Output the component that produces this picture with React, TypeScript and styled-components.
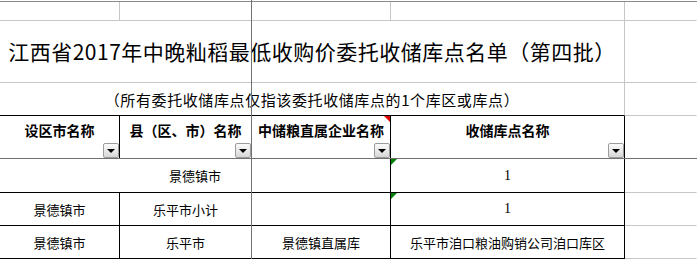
import styled, { createGlobalStyle } from 'styled-components';

type Line = 'grid' | 'black' | 'none';

const lineColor: Record<Line, string> = {
  grid: '#c6c6c6',
  black: '#000000',
  none: 'transparent',
};

const GlobalStyle = createGlobalStyle`
  html, body {
    margin: 0;
    padding: 0;
    background: #ffffff;
  }
  body {
    font-family: "Noto Sans CJK SC", "Liberation Sans", sans-serif;
    color: #000;
  }
`;

const Sheet = styled.div`
  position: relative;
  width: 697px;
  height: 259px;
  overflow: hidden;
  display: grid;
  grid-template-columns: 120px 132px 139px 234px 1fr;
  grid-template-rows: 2px 19px 62px 33px 43px 34px 33px 33px 1fr;
  background: #ffffff;
`;

const TopEdge = styled.div`
  grid-column: 1 / -1;
  box-sizing: border-box;
  border-bottom: 1px solid #8a8a8a;
`;

const Cell = styled.div<{
  $span?: number;
  $right?: Line;
  $bottom?: Line;
  $size?: number;
  $bold?: boolean;
  $lift?: number;
  $serif?: boolean;
  $track?: number;
}>`
  position: relative;
  box-sizing: border-box;
  grid-column: span ${(p) => p.$span ?? 1};
  border-right: 1px solid ${(p) => lineColor[p.$right ?? 'grid']};
  border-bottom: 1px solid ${(p) => lineColor[p.$bottom ?? 'grid']};
  display: flex;
  align-items: center;
  justify-content: center;
  padding-bottom: ${(p) => p.$lift ?? 0}px;
  font-family: ${(p) =>
    p.$serif
      ? '"Liberation Serif", serif'
      : '"Noto Sans CJK SC", "Liberation Sans", sans-serif'};
  font-size: ${(p) => p.$size ?? 13}px;
  font-weight: ${(p) => (p.$bold ? 700 : 400)};
  letter-spacing: ${(p) => p.$track ?? 0}px;
  white-space: nowrap;
  line-height: 1;
`;

const FilterButton = styled.div`
  position: absolute;
  right: 0;
  bottom: 0;
  width: 16px;
  height: 15px;
  box-sizing: border-box;
  border: 1px solid #9c9c9c;
  border-radius: 2px;
  background: linear-gradient(180deg, #fbfbfb 0%, #e6e6e6 60%, #d6d6d6 100%);
  display: flex;
  align-items: center;
  justify-content: center;

  &::after {
    content: '';
    width: 0;
    height: 0;
    border-left: 4px solid transparent;
    border-right: 4px solid transparent;
    border-top: 4px solid #000;
    margin-top: 1px;
  }
`;

const CornerMark = styled.div<{ $color: string; $side: 'left' | 'right' }>`
  position: absolute;
  top: 0;
  ${(p) => p.$side}: 0;
  width: 0;
  height: 0;
  border-top: 6px solid ${(p) => p.$color};
  ${(p) =>
    p.$side === 'right'
      ? 'border-left: 6px solid transparent;'
      : 'border-right: 6px solid transparent;'}
`;

const FreezeV = styled.div`
  position: absolute;
  top: 0;
  bottom: 0;
  left: 251px;
  width: 1px;
  background: #707070;
`;

const FreezeH = styled.div`
  position: absolute;
  left: 0;
  right: 0;
  top: 158px;
  height: 1px;
  background: #707070;
`;

const headers = ['设区市名称', '县（区、市）名称', '中储粮直属企业名称', '收储库点名称'];

export default function App() {
  return (
    <>
      <GlobalStyle />
      <Sheet>
        <TopEdge />

        {/* blank first row */}
        <Cell />
        <Cell />
        <Cell />
        <Cell />
        <Cell $right="none" />

        {/* title */}
        <Cell $span={4} $size={21} $track={0.5}>
          江西省2017年中晚籼稻最低收购价委托收储库点名单（第四批）
        </Cell>
        <Cell $right="none" />

        <Cell $span={4} $size={15} $track={0.6} $bottom="black">
          （所有委托收储库点仅指该委托收储库点的1个库区或库点）
        </Cell>
        <Cell $right="none" />

        {/* header with filter buttons */}
        {headers.map((h, i) => (
          <Cell key={h} $right="black" $bold $size={14} $lift={14}>
            {h}
            {i === 2 && <CornerMark $color="#e00000" $side="right" />}
            <FilterButton />
          </Cell>
        ))}
        <Cell $right="none" />

        <Cell $span={3} $right="black" $bottom="black">
          景德镇市
        </Cell>
        <Cell $right="black" $bottom="black" $serif $size={14}>
          <CornerMark $color="#008000" $side="left" />1
        </Cell>
        <Cell $right="none" />

        <Cell $right="black" $bottom="black">
          景德镇市
        </Cell>
        <Cell $right="black" $bottom="black">
          乐平市小计
        </Cell>
        <Cell $right="black" $bottom="black" />
        <Cell $right="black" $bottom="black" $serif $size={14}>
          <CornerMark $color="#008000" $side="left" />1
        </Cell>
        <Cell $right="none" />

        <Cell $right="black" $bottom="black">
          景德镇市
        </Cell>
        <Cell $right="black" $bottom="black">
          乐平市
        </Cell>
        <Cell $right="black" $bottom="black">
          景德镇直属库
        </Cell>
        <Cell $right="black" $bottom="black">
          乐平市洎口粮油购销公司洎口库区
        </Cell>
        <Cell $right="none" />

        <FreezeV />
        <FreezeH />
      </Sheet>
    </>
  );
}
